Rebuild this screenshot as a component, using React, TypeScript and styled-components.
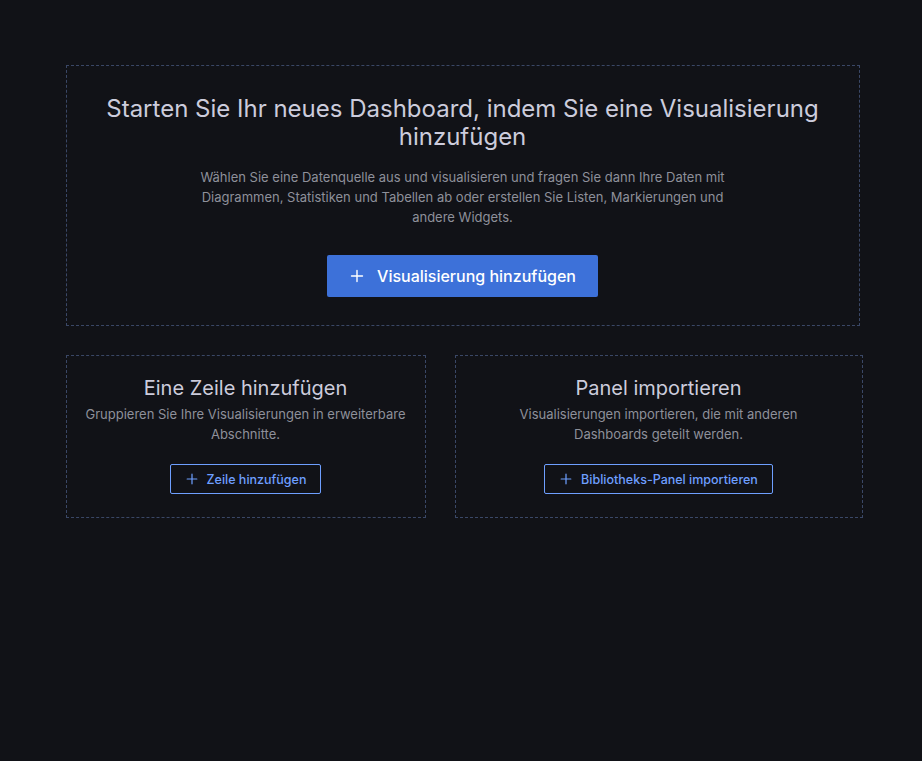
import styled, { createGlobalStyle } from 'styled-components';

const GlobalStyle = createGlobalStyle`
    html, body {
        margin: 0;
        background: #111217;
        font-family: Inter, "Noto Sans", sans-serif;
        color: #ccccdc;
    }
`;

function Plus({ size }: { size: number }) {
    return (
        <svg width={size} height={size} viewBox="0 0 16 16" fill="none" stroke="currentColor" strokeWidth="1.4" strokeLinecap="round">
            <path d="M8 2.5v11M2.5 8h11" />
        </svg>
    );
}

function App() {
    return (
        <>
            <GlobalStyle />
            <Page>
                <HeroBox>
                    <HeroTitle>Starten Sie Ihr neues Dashboard, indem Sie eine Visualisierung hinzufügen</HeroTitle>
                    <HeroText>
                        Wählen Sie eine Datenquelle aus und visualisieren und fragen Sie dann Ihre Daten mit Diagrammen,
                        Statistiken und Tabellen ab oder erstellen Sie Listen, Markierungen und andere Widgets.
                    </HeroText>
                    <PrimaryButton><Plus size={16} />Visualisierung hinzufügen</PrimaryButton>
                </HeroBox>
                <CardRow>
                    <Card>
                        <CardTitle>Eine Zeile hinzufügen</CardTitle>
                        <CardText>Gruppieren Sie Ihre Visualisierungen in erweiterbare Abschnitte.</CardText>
                        <OutlineButton><Plus size={14} />Zeile hinzufügen</OutlineButton>
                    </Card>
                    <Card>
                        <CardTitle>Panel importieren</CardTitle>
                        <CardText>Visualisierungen importieren, die mit anderen Dashboards geteilt werden.</CardText>
                        <OutlineButton><Plus size={14} />Bibliotheks-Panel importieren</OutlineButton>
                    </Card>
                </CardRow>
            </Page>
        </>
    );
}

const Page = styled.div`
    width: 797px;
    margin: 0 auto;
    padding: 65px 0 0 3px;
    display: flex;
    flex-direction: column;
    gap: 29px;
    min-height: 761px;
    box-sizing: border-box;
`;

const Dashed = styled.div`
    border: 1px dashed #3a4766;
    display: flex;
    flex-direction: column;
    align-items: center;
    text-align: center;
    box-sizing: border-box;
`;

const HeroBox = styled(Dashed)`
    padding: 29px 24px 28px;
    height: 261px;
`;

const HeroTitle = styled.h1`
    margin: 0 0 16px;
    font-size: 24px;
    line-height: 28px;
    font-weight: 400;
    color: #ccccdc;
`;

const HeroText = styled.p`
    margin: 0 0 28px;
    max-width: 530px;
    font-size: 13px;
    line-height: 20px;
    color: #8e909a;
`;

const PrimaryButton = styled.button`
    display: flex;
    align-items: center;
    gap: 12px;
    height: 43px;
    padding: 0 22px;
    border: 0;
    border-radius: 2px;
    background: #3d71d9;
    color: #fff;
    font-family: inherit;
    font-size: 16px;
    font-weight: 500;
`;

const CardRow = styled.div`
    display: grid;
    grid-template-columns: 360px 408px;
    gap: 29px;
`;

const Card = styled(Dashed)`
    height: 163px;
    padding: 20px 16px 0;
`;

const CardTitle = styled.h2`
    margin: 0 0 4px;
    font-size: 20px;
    line-height: 24px;
    font-weight: 400;
    color: #ccccdc;
`;

const CardText = styled.p`
    margin: 0 0 20px;
    font-size: 13px;
    line-height: 20px;
    color: #8e909a;
    max-width: 330px;
`;

const OutlineButton = styled.button`
    display: flex;
    align-items: center;
    gap: 8px;
    height: 30px;
    padding: 0 14px;
    border: 1px solid #6e9fff;
    border-radius: 2px;
    background: transparent;
    color: #6e9fff;
    font-family: inherit;
    font-size: 12.5px;
    font-weight: 500;
`;

export default App;
